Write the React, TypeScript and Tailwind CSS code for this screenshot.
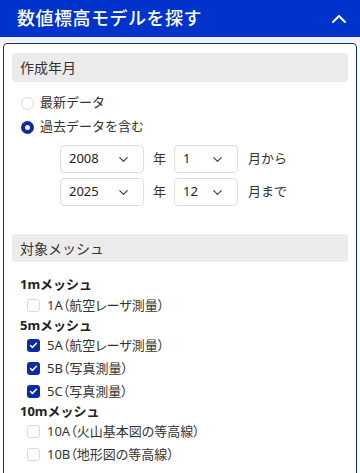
import { ChevronDown, ChevronUp, Check } from 'lucide-react';

const font = { fontFamily: '"Noto Sans", "Noto Sans CJK JP", sans-serif' };

function Radio({ checked, label }: { checked: boolean; label: string }) {
  return (
    <div className="flex items-center h-[24px] gap-[6px] pl-[9px]">
      {checked ? (
        <span className="w-[13px] h-[13px] rounded-full border-[4px] border-[#0a2aa8] bg-white" />
      ) : (
        <span className="w-[13px] h-[13px] rounded-full border border-[#d9d9d9] bg-white" />
      )}
      <span className="text-[13px] text-[#333]">{label}</span>
    </div>
  );
}

function Box({ checked, label }: { checked: boolean; label: string }) {
  return (
    <div className="flex items-center h-[23px] gap-[7px] pl-[7px]">
      {checked ? (
        <span className="w-[13px] h-[13px] rounded-[3px] bg-[#0a2aa8] flex items-center justify-center">
          <Check size={9} strokeWidth={4} color="#fff" />
        </span>
      ) : (
        <span className="w-[13px] h-[13px] rounded-[3px] border border-[#d9d9d9] bg-white" />
      )}
      <span className="text-[13px] text-[#333] [font-feature-settings:'palt']">{label}</span>
    </div>
  );
}

function Select({ value, w }: { value: string; w: string }) {
  return (
    <div className={`${w} h-[28px] border border-[#dedede] rounded-[4px] flex items-center justify-between pl-[8px] pr-[12px]`}>
      <span className="text-[13px] text-[#222]">{value}</span>
      <ChevronDown size={15} strokeWidth={2} color="#444" />
    </div>
  );
}

function DateRow({ y, m, suffix }: { y: string; m: string; suffix: string }) {
  return (
    <div className="flex items-center h-[28px] pl-[48px]">
      <Select value={y} w="w-[84px]" />
      <span className="text-[13px] text-[#333] ml-[9px] mr-[8px]">年</span>
      <Select value={m} w="w-[64px]" />
      <span className="text-[13px] text-[#333] ml-[10px]">{suffix}</span>
    </div>
  );
}

export default function App() {
  return (
    <div className="w-[360px] h-[473px] overflow-hidden bg-white" style={font}>
      {/* ヘッダー */}
      <div className="h-[37px] bg-[#0033cc] flex items-center justify-between pl-[17px] pr-[9px]">
        <h1 className="text-[18px] font-medium text-white tracking-[0.5px]">数値標高モデルを探す</h1>
        <ChevronUp size={24} strokeWidth={2} color="#fff" />
      </div>
      <div className="h-[6px] bg-[#eef2fb]" />

      <div className="mx-[3px] border border-[#12308f] rounded-[4px] pt-[9px] px-[8px] pb-[20px] h-[500px]">
        <div className="h-[29px] bg-[#ebebeb] rounded-[4px] flex items-center pl-[8px]">
          <span className="text-[14px] text-[#333]">作成年月</span>
        </div>
        <div className="mt-[9px]">
          <Radio checked={false} label="最新データ" />
          <Radio checked label="過去データを含む" />
        </div>
        <div className="mt-[6px] flex flex-col gap-[5px]">
          <DateRow y="2008" m="1" suffix="月から" />
          <DateRow y="2025" m="12" suffix="月まで" />
        </div>

        <div className="mt-[28px] h-[28px] bg-[#ebebeb] rounded-[4px] flex items-center pl-[8px]">
          <span className="text-[14px] text-[#333]">対象メッシュ</span>
        </div>
        <div className="mt-[12px] pl-[8px]">
          <div className="text-[13px] font-bold text-[#222] h-[20px] leading-[20px]">1mメッシュ</div>
          <Box checked={false} label="1A（航空レーザ測量）" />
          <div className="text-[13px] font-bold text-[#222] h-[17px] leading-[17px]">5mメッシュ</div>
          <Box checked label="5A（航空レーザ測量）" />
          <Box checked label="5B（写真測量）" />
          <Box checked label="5C（写真測量）" />
          <div className="text-[13px] font-bold text-[#222] h-[17px] leading-[17px]">10mメッシュ</div>
          <Box checked={false} label="10A（火山基本図の等高線）" />
          <Box checked={false} label="10B（地形図の等高線）" />
        </div>
      </div>
    </div>
  );
}
